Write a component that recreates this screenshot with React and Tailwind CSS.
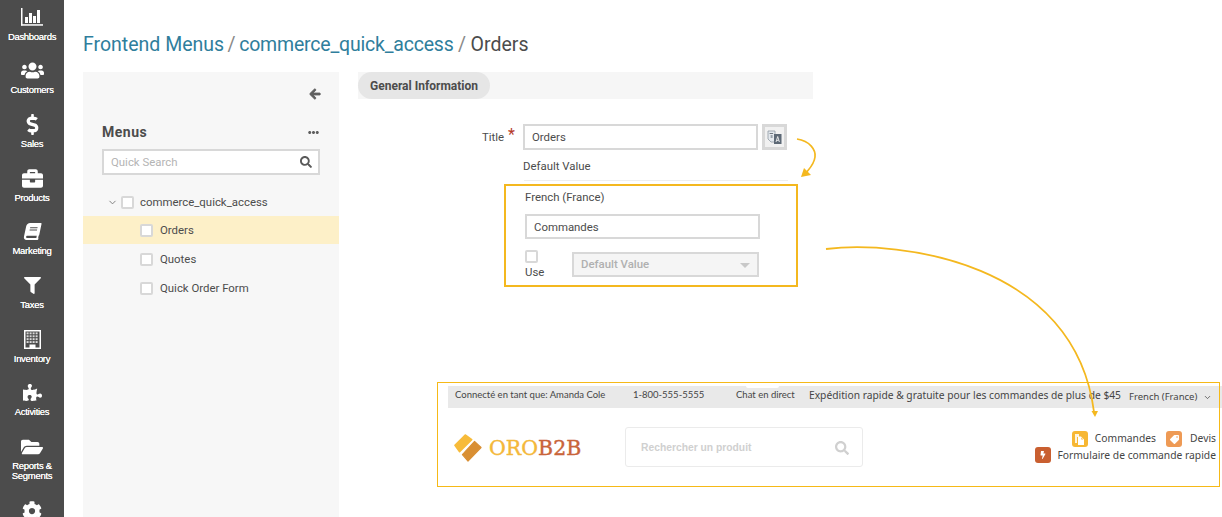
import React from "react";
import { FaUsers, FaDollarSign, FaBriefcase, FaBook, FaFilter, FaPuzzlePiece, FaFolderOpen, FaCog, FaArrowLeft, FaEllipsisH, FaSearch, FaTag, FaBolt } from "react-icons/fa";
import { LuChevronDown } from "react-icons/lu";

function DashIcon() {
  return (
    <svg width="22" height="18" viewBox="0 0 22 18" fill="white">
      <rect x="0" y="0" width="1.5" height="17.5" />
      <rect x="0" y="16.2" width="22" height="1.5" />
      <rect x="4" y="9" width="3" height="6" />
      <rect x="8" y="5" width="3" height="10" />
      <rect x="12" y="8" width="3" height="7" />
      <rect x="16" y="2" width="3" height="13" />
    </svg>
  );
}

function BuildingIcon() {
  const cells = [];
  for (let r = 0; r < 4; r++) for (let c = 0; c < 4; c++) cells.push(<rect key={r + "-" + c} x={2.6 + c * 3} y={2.4 + r * 2.9} width="2" height="1.9" fill="#d9d9d9" />);
  return (
    <svg width="17" height="19" viewBox="0 0 17 19">
      <rect x="0.75" y="0.75" width="15.5" height="17.5" fill="#4c4c4c" stroke="white" strokeWidth="1.5" />
      {cells}
      <rect x="5.5" y="14.5" width="6" height="3.5" fill="white" />
    </svg>
  );
}

function DocIcon() {
  return (
    <svg width="11" height="11" viewBox="0 0 11 11" fill="white">
      <path d="M1 0H5V3H3V9H1Z" opacity="0.85" />
      <path d="M4 2.5H7L10 5.5V11H4ZM7.3 3.5V5.5H9.3Z" fillRule="evenodd" />
    </svg>
  );
}

function TranslateIcon() {
  return (
    <svg width="15" height="15" viewBox="0 0 15 15">
      <path d="M1 1H8V12H4L1 9Z" fill="#e4e9ee" stroke="#8f99a3" strokeWidth="0.8" />
      <rect x="2.6" y="3" width="3.5" height="1" fill="#6d7680" />
      <rect x="3.6" y="5" width="2" height="3" fill="#9aa3ac" />
      <rect x="7" y="4" width="7.5" height="10" fill="#5d6976" />
      <path d="M9 12 L10.7 6.5 L12.4 12 M9.7 10.4 H11.7" fill="none" stroke="#f2f2f2" strokeWidth="0.9" />
    </svg>
  );
}

const nav = [
  { I: DashIcon, l: ["Dashboards"] },
  { I: () => <FaUsers size={23} />, l: ["Customers"] },
  { I: () => <FaDollarSign size={21} />, l: ["Sales"] },
  { I: () => <FaBriefcase size={21} />, l: ["Products"] },
  { I: () => <FaBook size={17} className="-skew-x-12" />, l: ["Marketing"] },
  { I: () => <FaFilter size={17} />, l: ["Taxes"] },
  { I: BuildingIcon, l: ["Inventory"] },
  { I: () => <FaPuzzlePiece size={19} />, l: ["Activities"] },
  { I: () => <FaFolderOpen size={22} />, l: ["Reports &", "Segments"], tall: true },
  { I: () => <FaCog size={20} />, l: [] },
];

function Box({ className = "" }) {
  return <span className={"block w-[13px] h-[13px] border-2 border-[#d8d8d8] bg-white rounded-[2px] shrink-0 " + className} />;
}

function TreeRow({ label, active }) {
  return (
    <div className={"flex items-center h-[28px] pl-[57px] mb-px gap-[7px] text-[#4c4c4c] " + (active ? "bg-[#fdf0c8]" : "")}>
      <Box />
      <span className="pt-px">{label}</span>
    </div>
  );
}

function Icon16({ className, children }) {
  return <span className={"w-[16px] h-[16px] rounded-[3px] flex items-center justify-center text-white shrink-0 " + className}>{children}</span>;
}

export default function App() {
  return (
    <div className="relative flex w-[1222px] h-[517px] overflow-hidden bg-white font-['Roboto',sans-serif] text-[11.4px] text-[#4c4c4c]">
      <aside className="w-[64px] h-[517px] shrink-0 bg-[#4c4c4c] text-white overflow-hidden text-center font-['Liberation_Sans',sans-serif] text-[9.5px] tracking-[-0.3px] leading-[10px] flex flex-col items-center pt-[5px]">
        {nav.map((n, i) => (
          <div key={i} className={(n.tall ? "h-[64px]" : "h-[53.7px]") + " w-full flex flex-col items-center shrink-0"}>
            <div className="h-[24px] flex items-center justify-center">
              <n.I />
            </div>
            <div className="mt-[2.5px]">
              {n.l.map((t) => (
                <div key={t} className="[text-shadow:0_0_0.6px_#fff]">{t}</div>
              ))}
            </div>
          </div>
        ))}
      </aside>

      <main className="flex-1 min-w-0 pl-[19px] pt-[33px]">
        <h1 className="text-[19.5px] leading-[23px] font-normal h-[39px] flex">
          <span className="text-[#2f7e9c]">Frontend Menus</span>
          <span className="text-[#888] mx-[3.5px]">/</span>
          <span className="text-[#2f7e9c] tracking-[-0.2px]">commerce_quick_access</span>
          <span className="text-[#888] mx-[4.5px]">/</span>
          <span className="text-[#4c4c4c]">Orders</span>
        </h1>

        <div className="flex">
          <section className="w-[256px] h-[445px] shrink-0 bg-[#f7f7f7]">
            <div className="flex justify-end pt-[16px] pr-[18px] h-[41px] text-[#5f5f5f]">
              <FaArrowLeft size={12} stroke="currentColor" strokeWidth={40} />
            </div>
            <div className="flex items-center justify-between pl-[19px] pr-[20px] mt-[9px] h-[20px]">
              <span className="text-[14px] font-bold tracking-[0.5px] text-[#4c4c4c]">Menus</span>
              <FaEllipsisH size={11} className="text-[#5f5f5f]" />
            </div>
            <div className="mx-[19px] mt-[7px] h-[26px] w-[218px] border-2 border-[#d8d8d8] bg-white flex items-center justify-between pl-[7px] pr-[6px] text-[#b4b4b4]">
              <span className="pt-px">Quick Search</span>
              <FaSearch size={12} className="text-[#5a5a5a]" />
            </div>
            <div className="mt-[13px]">
              <div className="flex items-center h-[28px] pl-[24px] gap-[3px]">
                <LuChevronDown size={11} className="text-[#777]" />
                <Box className="ml-[0px]" />
                <span className="ml-[3px] pt-px">commerce_quick_access</span>
              </div>
              <TreeRow label="Orders" active />
              <TreeRow label="Quotes" />
              <TreeRow label="Quick Order Form" />
            </div>
          </section>

          <section className="flex-1 min-w-0 pl-[19px]">
            <div className="w-[455px] h-[27px] bg-[#f6f6f6]">
              <div className="w-[132px] h-[27px] pt-px rounded-full bg-[#e6e6e6] flex items-center justify-center text-[12px] font-bold text-[#4c4c4c]">General Information</div>
            </div>

            <div className="ml-[126px] mt-[25px] flex items-start">
              <div className="w-[39px] h-[26px] flex items-center justify-end pr-[19px] relative pt-[1px]">
                <span>Title</span>
                <span className="absolute right-[8px] top-[-1px] text-[#b53a2a] text-[16px]">*</span>
              </div>
              <div className="w-[235px] h-[26px] border-2 border-[#d8d8d8] bg-white flex items-center pl-[7px] pt-[1px]">Orders</div>
              <div className="ml-[4px] w-[25px] h-[26px] border-[3px] border-[#d8d8d8] bg-[#f1f1f1] flex items-center justify-center">
                <TranslateIcon />
              </div>
            </div>
            <div className="ml-[165px] mt-[10px] leading-[13px] text-[#4c4c4c]">Default Value</div>
            <div className="ml-[166px] mt-[7px] w-[264px] h-px bg-[#eeeeee]" />

            <div className="ml-[146px] mt-[3px] w-[294px] h-[103px] border-2 border-[#f4b81f] pl-[19px] pt-[5px]">
              <div className="leading-[13px]">French (France)</div>
              <div className="mt-[10px] w-[235px] h-[25px] border-2 border-[#d8d8d8] bg-white flex items-center pl-[7px] pt-[2px]">Commandes</div>
              <div className="flex mt-[11px]">
                <div className="w-[47px]">
                  <Box />
                  <div className="leading-[12px] mt-[3px]">Use</div>
                </div>
                <div className="mt-[2px] w-[187px] h-[25px] border-2 border-[#d8d8d8] bg-[#f5f5f5] flex items-center justify-between pl-[7px] pr-[7px] pt-px text-[#b0b0b0] font-medium">
                  <span>Default Value</span>
                  <span className="w-0 h-0 border-x-[5px] border-x-transparent border-t-[5px] border-t-[#c8c8c8]" />
                </div>
              </div>
            </div>

            <div className="ml-[79px] mt-[95px] w-[783px] h-[105px] pt-[4px] pl-[11px] relative bg-white">
              <div className="relative h-[22px] bg-[#e9e9e9] -mr-[3px] flex items-center pl-[7px] text-[#454545] font-['Lato',sans-serif] text-[9.5px] whitespace-nowrap">
                <span className="absolute left-[298px] top-0 w-[33px] h-[2px] bg-white rounded-b-[2px]" />
                <span className="w-[178px] pb-[4px]">Connecté en tant que: Amanda Cole</span>
                <span className="w-[103px] pb-[4px]">1-800-555-5555</span>
                <span className="w-[73px] pb-[4px]">Chat en direct</span>
                <span className="font-['Noto_Sans',sans-serif] text-[10.25px] w-[320px] pb-[3px]">Expédition rapide &amp; gratuite pour les commandes de plus de $45</span>
                <span className="font-['Noto_Sans',sans-serif] flex items-center gap-[4px] text-[9.5px]">French (France) <LuChevronDown size={9} className="ml-[2px]" /></span>
              </div>
              <div className="flex mt-[19px] items-start">
                <div className="w-[177px] flex items-center gap-[7px] pl-[6px] h-[40px] pt-px">
                  <svg width="28" height="30" viewBox="0 0 30 30" strokeLinejoin="round">
                    <path d="M1 12 L12 1 L19 6 L6 19 Z" fill="#f7bb3a" stroke="#f7bb3a" strokeWidth="1.6" />
                    <path d="M22 8 L29 14.5 L15 29 L9 22 Z" fill="#d98f33" stroke="#d98f33" strokeWidth="1.2" />
                  </svg>
                  <span className="font-['DejaVu_Serif',serif] text-[20.5px] leading-[24px] text-[#f4b83a] [-webkit-text-stroke:0.4px_currentColor]">ORO<span className="text-[#c9643a]">B2B</span></span>
                </div>
                <div className="w-[238px] h-[40px] border border-[#ebebeb] rounded-[3px] flex items-center justify-between pl-[15px] pr-[13px] pt-px text-[#d0d0d0] font-bold font-['Liberation_Sans',sans-serif] text-[10.3px]">
                  <span>Rechercher un produit</span>
                  <FaSearch size={14} />
                </div>
                <div className="ml-auto mr-[4px] mt-[4px] text-[10.3px] font-['Noto_Sans',sans-serif] text-[#454545] flex flex-col items-end">
                  <div className="flex items-center h-[16px]">
                    <Icon16 className="bg-[#f7b733]"><DocIcon /></Icon16>
                    <span className="ml-[7px] leading-[14px] pb-[2px]">Commandes</span>
                    <Icon16 className="ml-[10px] bg-[#ee9a55]"><FaTag size={9} className="-scale-x-100" /></Icon16>
                    <span className="ml-[6px] w-[28px] leading-[14px] pb-[2px] text-right">Devis</span>
                  </div>
                  <div className="flex items-center h-[16px]">
                    <Icon16 className="bg-[#c95f30]"><FaBolt size={8} /></Icon16>
                    <span className="ml-[6px] leading-[14px] pb-[1px]">Formulaire de commande rapide</span>
                  </div>
                </div>
              </div>
              <div className="absolute inset-0 border-[1px] border-[#f6b917] pointer-events-none" />
            </div>
          </section>
        </div>
      </main>

      <svg className="absolute left-0 top-0 pointer-events-none" width="1222" height="517" fill="none">
        <path d="M797 139 C810 141 816 150 815 157 C814 165 808 170 806 173" stroke="#f4b81f" strokeWidth="1.7" />
        <path d="M801 177 L811 175 L804 168 Z" fill="#f4b81f" />
        <path d="M826 249 C900 240 1075 262 1094 412" stroke="#f4b81f" strokeWidth="1.8" />
        <path d="M1091.5 411 L1098 411 L1095 417 Z" fill="#f4b81f" />
      </svg>
    </div>
  );
}
